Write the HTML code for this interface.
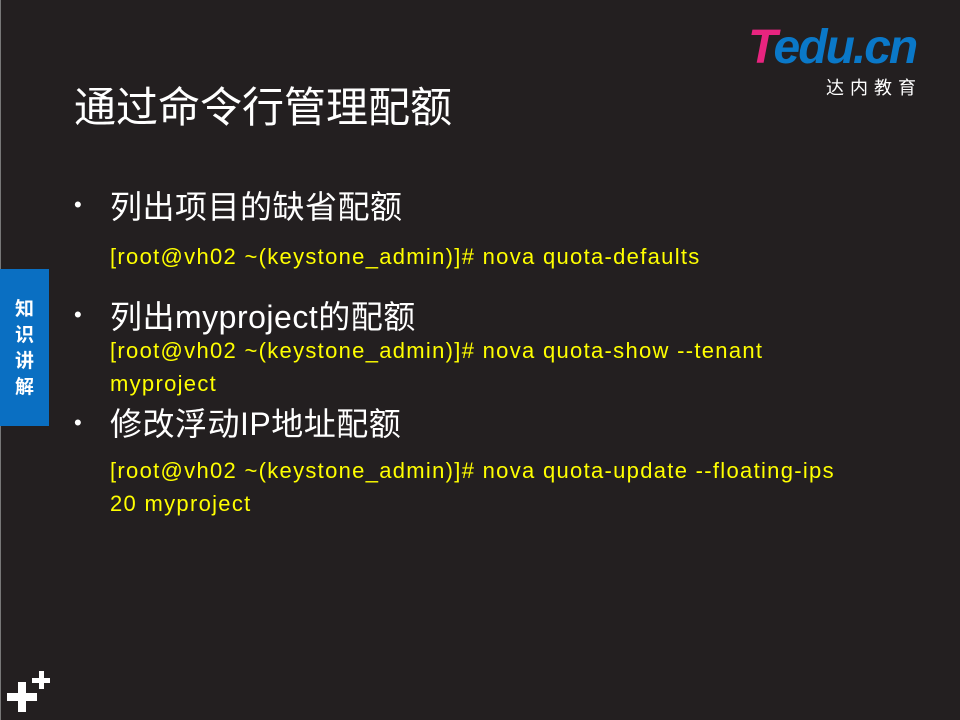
<!DOCTYPE html>
<html><head><meta charset="utf-8"><style>
body{margin:0;width:960px;height:720px;background:#231f20;position:relative;overflow:hidden;font-family:"Liberation Sans","Noto Sans CJK SC",sans-serif}
.a{position:absolute;white-space:nowrap}
.t{color:#fff;font-size:42px;left:74px;top:74px}
.b{color:#fff;font-size:32px;left:110px;letter-spacing:0.5px}
.dot{color:#fff;font-size:22px;left:74px}
.y{color:#ffff00;font-size:22px;left:110px;line-height:33px;letter-spacing:1.3px}
</style></head><body>
<div class="a" style="left:0;top:0;width:1px;height:720px;background:#777"></div>
<div class="a t">通过命令行管理配额</div>
<div class="a dot" style="top:192px">•</div>
<div class="a b" style="top:182px">列出项目的缺省配额</div>
<div class="a y" style="top:240px">[root@vh02 ~(keystone_admin)]# nova quota-defaults</div>
<div class="a dot" style="top:302px">•</div>
<div class="a b" style="top:292px">列出myproject的配额</div>
<div class="a y" style="top:334px">[root@vh02 ~(keystone_admin)]# nova quota-show --tenant<br>myproject</div>
<div class="a dot" style="top:410px">•</div>
<div class="a b" style="top:399px">修改浮动IP地址配额</div>
<div class="a y" style="top:454px">[root@vh02 ~(keystone_admin)]# nova quota-update --floating-ips<br>20 myproject</div>
<div class="a" style="left:0;top:269px;width:49px;height:157px;background:#0a6fc2;color:#fff;font-size:19px;font-weight:bold;text-align:center;line-height:26px;padding-top:28px;box-sizing:border-box;white-space:normal">知<br>识<br>讲<br>解</div>
<div class="a" style="left:748px;top:22px;font-size:48px;font-weight:bold;font-style:italic;letter-spacing:-2px;line-height:52px"><span style="color:#e8247f">T</span><span style="color:#0a78c8">edu.cn</span></div>
<div class="a" style="left:826px;top:74px;color:#fff;font-size:18px;letter-spacing:6px">达内教育</div>
<div class="a" style="left:7px;top:693px;width:30px;height:8px;background:#fff"></div>
<div class="a" style="left:18px;top:682px;width:8px;height:30px;background:#fff"></div>
<div class="a" style="left:32px;top:678px;width:18px;height:5px;background:#fff"></div>
<div class="a" style="left:39px;top:671px;width:5px;height:18px;background:#fff"></div>
</body></html>
